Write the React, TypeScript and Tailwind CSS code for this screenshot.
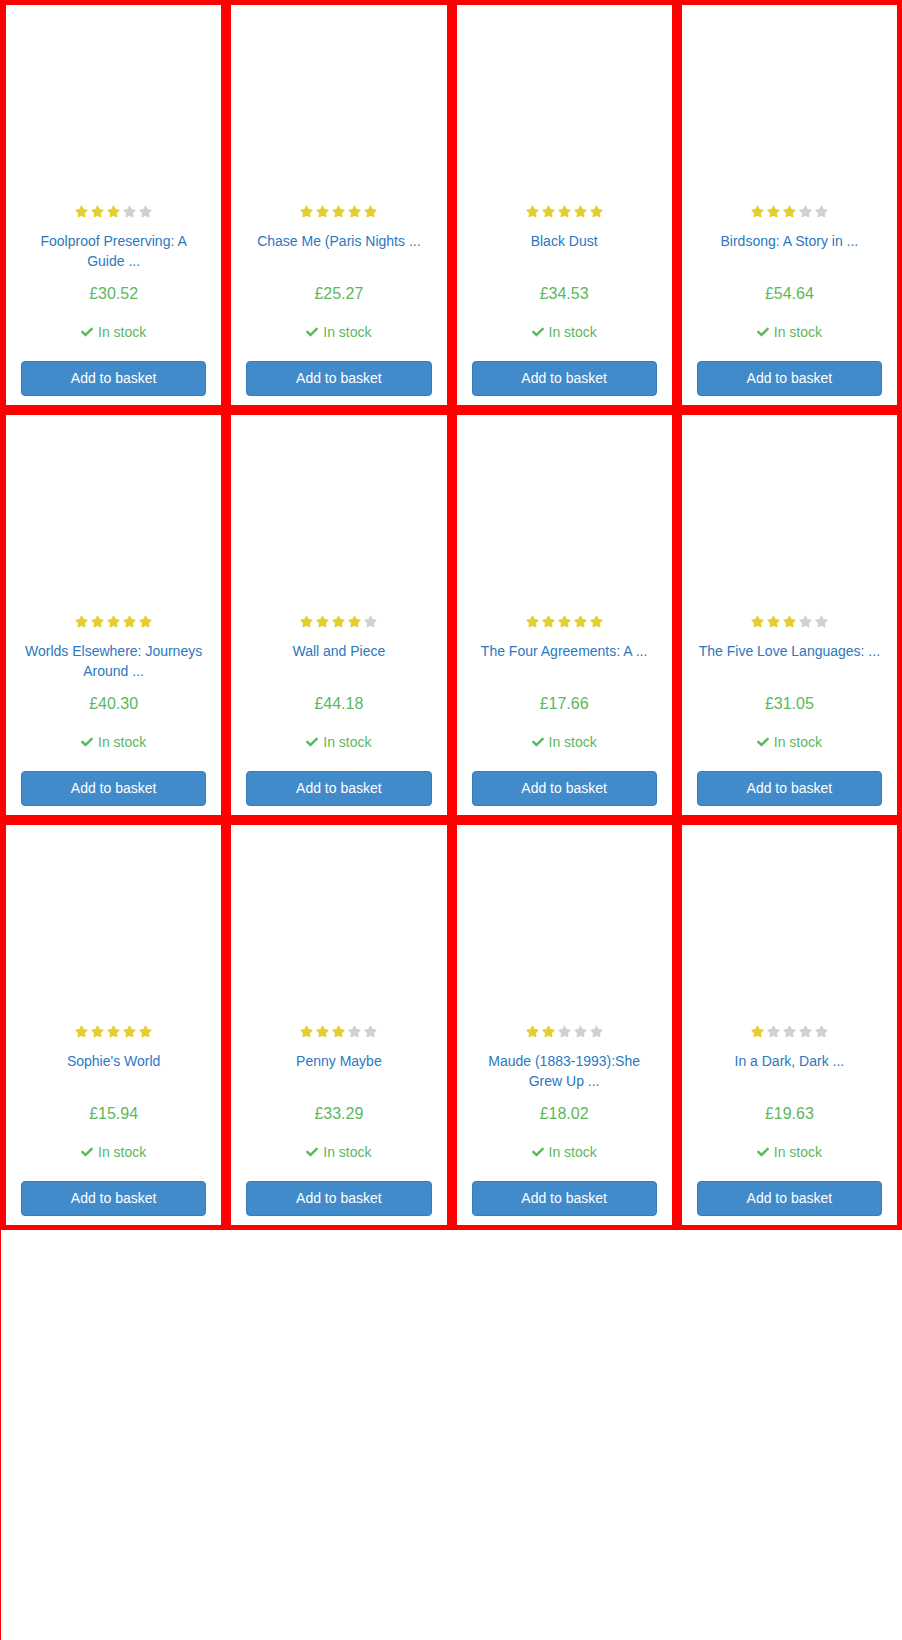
import { FaStar, FaCheck } from "react-icons/fa";

const books = [
  { title: "Foolproof Preserving: A Guide ...", rating: 3, price: "£30.52" },
  { title: "Chase Me (Paris Nights ...", rating: 5, price: "£25.27" },
  { title: "Black Dust", rating: 5, price: "£34.53" },
  { title: "Birdsong: A Story in ...", rating: 3, price: "£54.64" },
  { title: "Worlds Elsewhere: Journeys Around ...", rating: 5, price: "£40.30" },
  { title: "Wall and Piece", rating: 4, price: "£44.18" },
  { title: "The Four Agreements: A ...", rating: 5, price: "£17.66" },
  { title: "The Five Love Languages: ...", rating: 3, price: "£31.05" },
  { title: "Sophie's World", rating: 5, price: "£15.94" },
  { title: "Penny Maybe", rating: 3, price: "£33.29" },
  { title: "Maude (1883-1993):She Grew Up ...", rating: 2, price: "£18.02" },
  { title: "In a Dark, Dark ...", rating: 1, price: "£19.63" },
];

function Stars({ rating }: { rating: number }) {
  return (
    <div className="flex h-[17px] shrink-0 items-center justify-center gap-[3px]">
      {[1, 2, 3, 4, 5].map((i) => (
        <FaStar key={i} size={13} className={i <= rating ? "text-[#e6ce31]" : "text-[#d1d1d1]"} />
      ))}
    </div>
  );
}

export default function App() {
  return (
    <div className="min-h-[1640px] border-l border-[#ff0000] bg-white font-['Liberation_Sans',Arial,sans-serif]">
      <div className="grid grid-cols-4">
        {books.map((b) => (
          <article
            key={b.title}
            className="flex h-[410px] flex-col border-[5px] border-[#ff0000] bg-white px-[15px] text-center"
          >
            {/* image slot, left empty */}
            <div className="h-[198px] shrink-0" />
            <Stars rating={b.rating} />
            <h3 className="mt-[11px] h-[40px] shrink-0 text-[14px] leading-[20px] text-[#2a78c2]">{b.title}</h3>
            <p className="mt-[12px] text-[16px] leading-[22px] text-[#5cb85c]">{b.price}</p>
            <p className="mt-[17px] flex items-center justify-center gap-[5px] text-[14px] leading-[20px] text-[#5cb85c]">
              <FaCheck size={12} />
              In stock
            </p>
            <button className="mt-[19px] h-[35px] w-full shrink-0 rounded-[4px] border border-[#357ebd] bg-[#428bca] text-[14px] text-white">
              Add to basket
            </button>
          </article>
        ))}
      </div>
    </div>
  );
}
